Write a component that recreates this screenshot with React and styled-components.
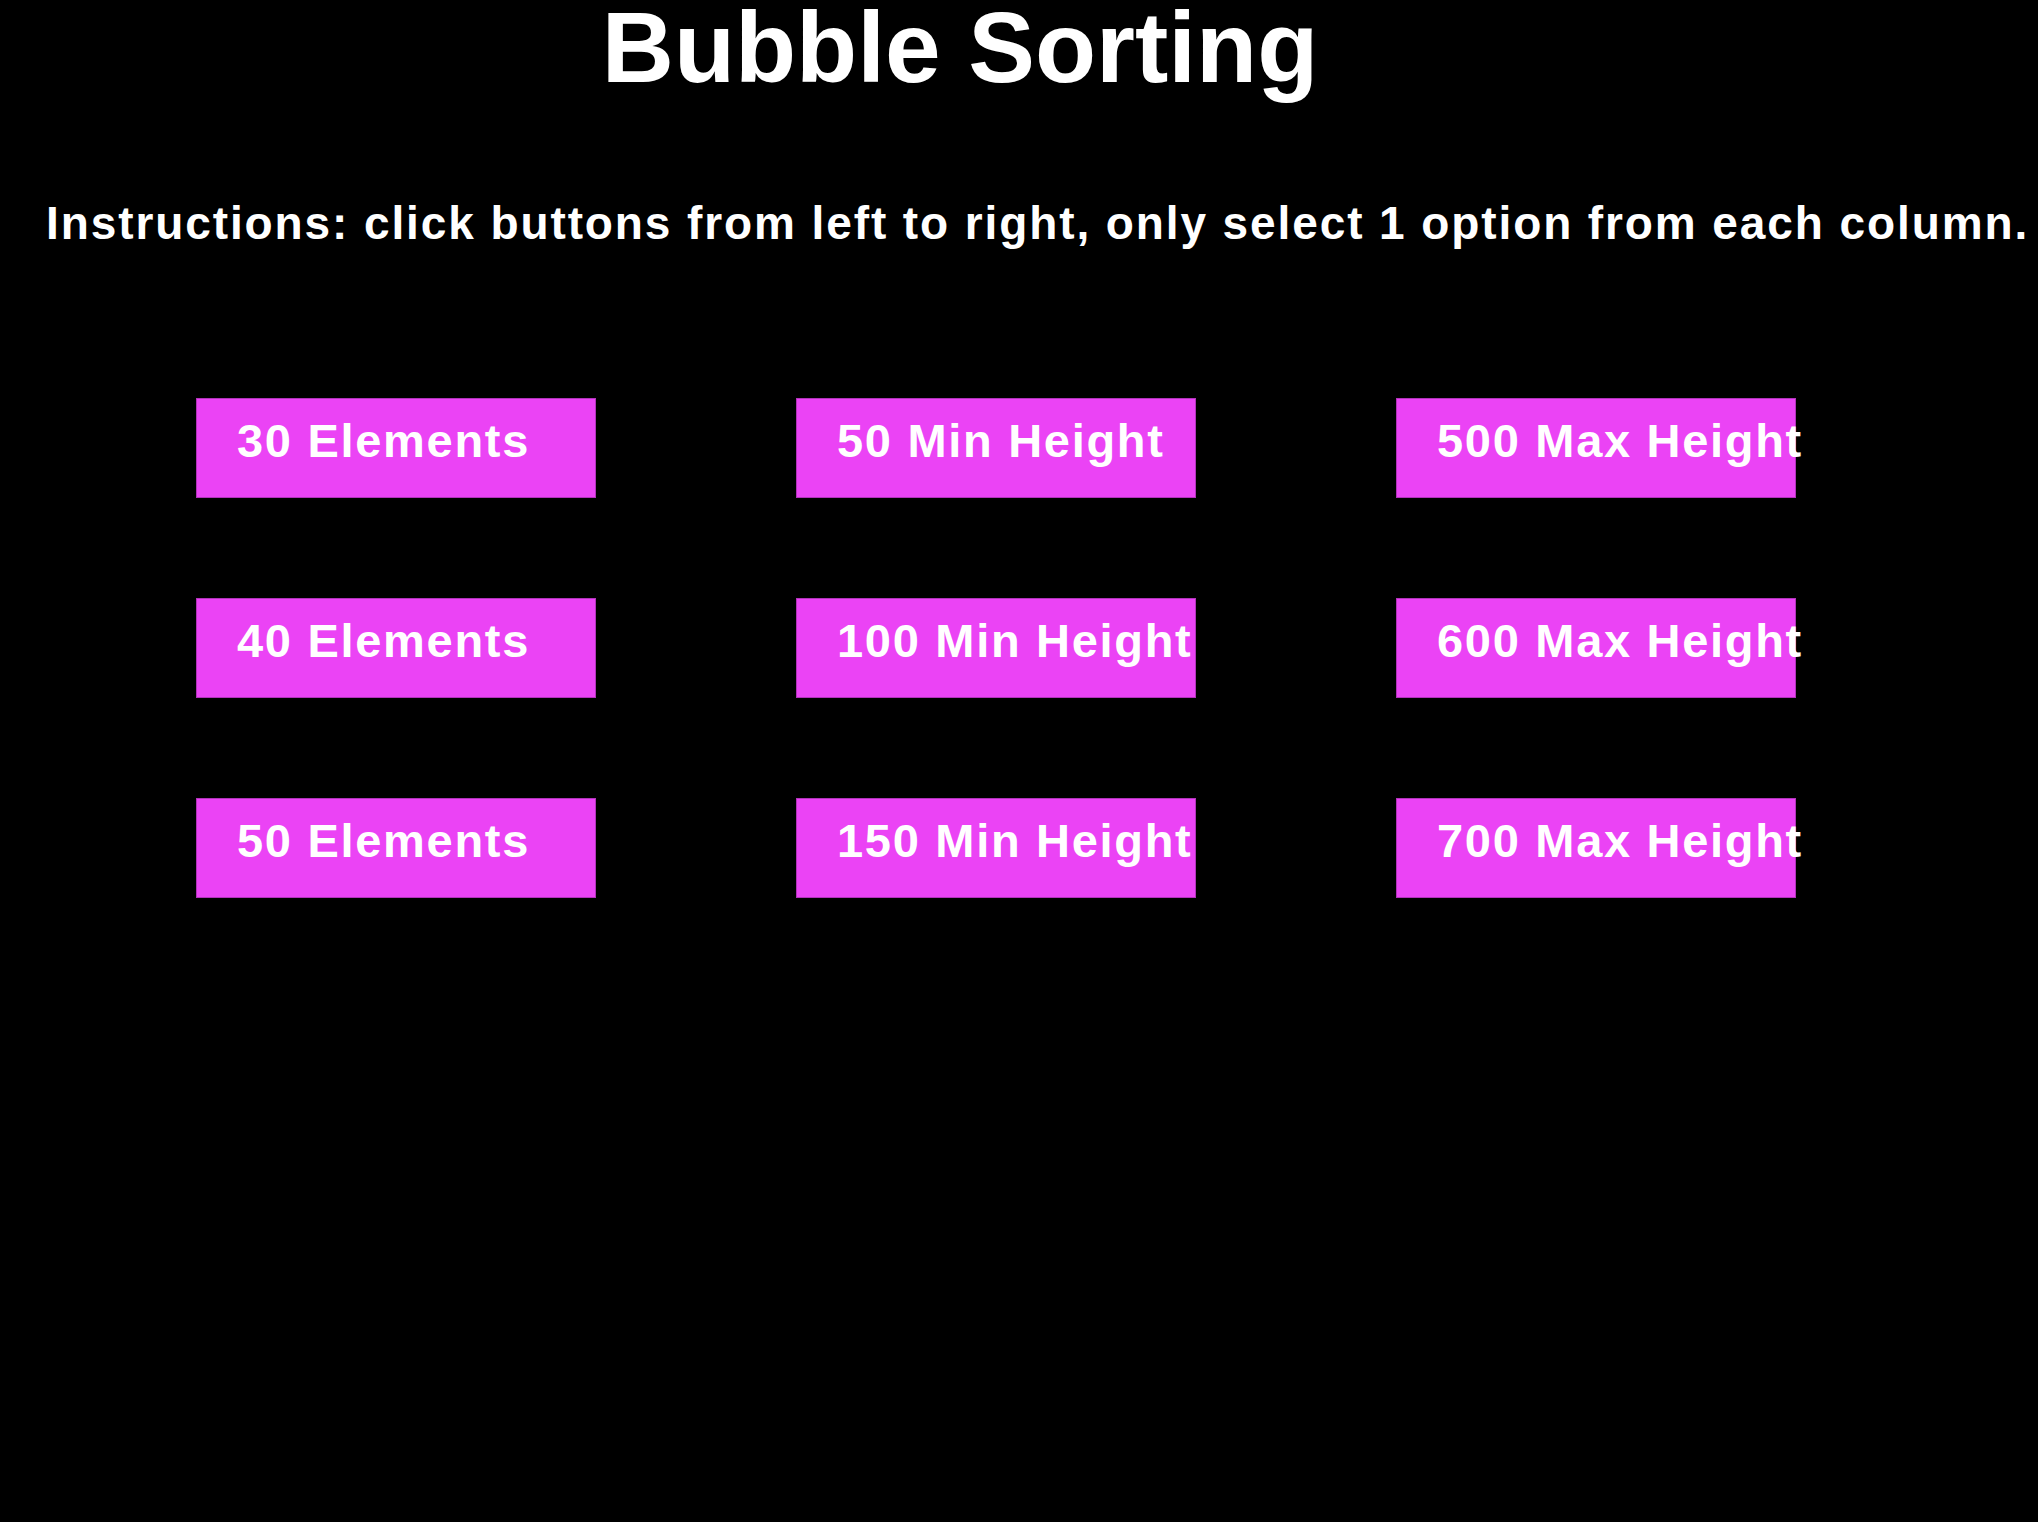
import React from 'react'
import styled, { createGlobalStyle } from 'styled-components'

const Global = createGlobalStyle`
  html, body {
    margin: 0;
    background: #000;
  }
  body {
    font-family: "Liberation Sans", Arial, Helvetica, sans-serif;
    color: #fff;
  }
`

const columns = [
  ['30 Elements', '40 Elements', '50 Elements'],
  ['50 Min Height', '100 Min Height', '150 Min Height'],
  ['500 Max Height', '600 Max Height', '700 Max Height'],
]

const App = () => {
  return (
    <Page>
      <Global />
      <Title>Bubble Sorting</Title>
      <Instructions>
        Instructions: click buttons from left to right, only select 1 option from each column.
      </Instructions>
      <Options>
        {columns.map((col, i) => (
          <Column key={i}>
            {col.map((label) => (
              <OptionButton key={label}>{label}</OptionButton>
            ))}
          </Column>
        ))}
      </Options>
    </Page>
  )
}

export default App

const Page = styled.div`
  width: 1920px;
  min-height: 1522px;
  padding-top: 4px;
  background: #000;
`

const Title = styled.h1`
  margin: 0;
  font-size: 100px;
  font-weight: bold;
  line-height: 86px;
  text-align: center;
`

const Instructions = styled.p`
  margin: 107px 0 0 46px;
  font-size: 46px;
  font-weight: bold;
  line-height: 53px;
  white-space: nowrap;
  letter-spacing: 1.9px;
`

const Options = styled.div`
  display: flex;
  gap: 200px;
  padding: 148px 0 0 196px;
`

const Column = styled.div`
  display: flex;
  flex-direction: column;
  gap: 100px;
`

const OptionButton = styled.button`
  box-sizing: border-box;
  width: 400px;
  height: 100px;
  padding: 14px 0 0 40px;
  background: #eb43f5;
  border: 1px solid #b232bb;
  color: #fff;
  font-family: "Liberation Sans", Arial, Helvetica, sans-serif;
  font-size: 47px;
  font-weight: bold;
  letter-spacing: 1.7px;
  text-align: left;
  white-space: nowrap;
  overflow: visible;
  display: flex;
  align-items: flex-start;
  cursor: pointer;
`
